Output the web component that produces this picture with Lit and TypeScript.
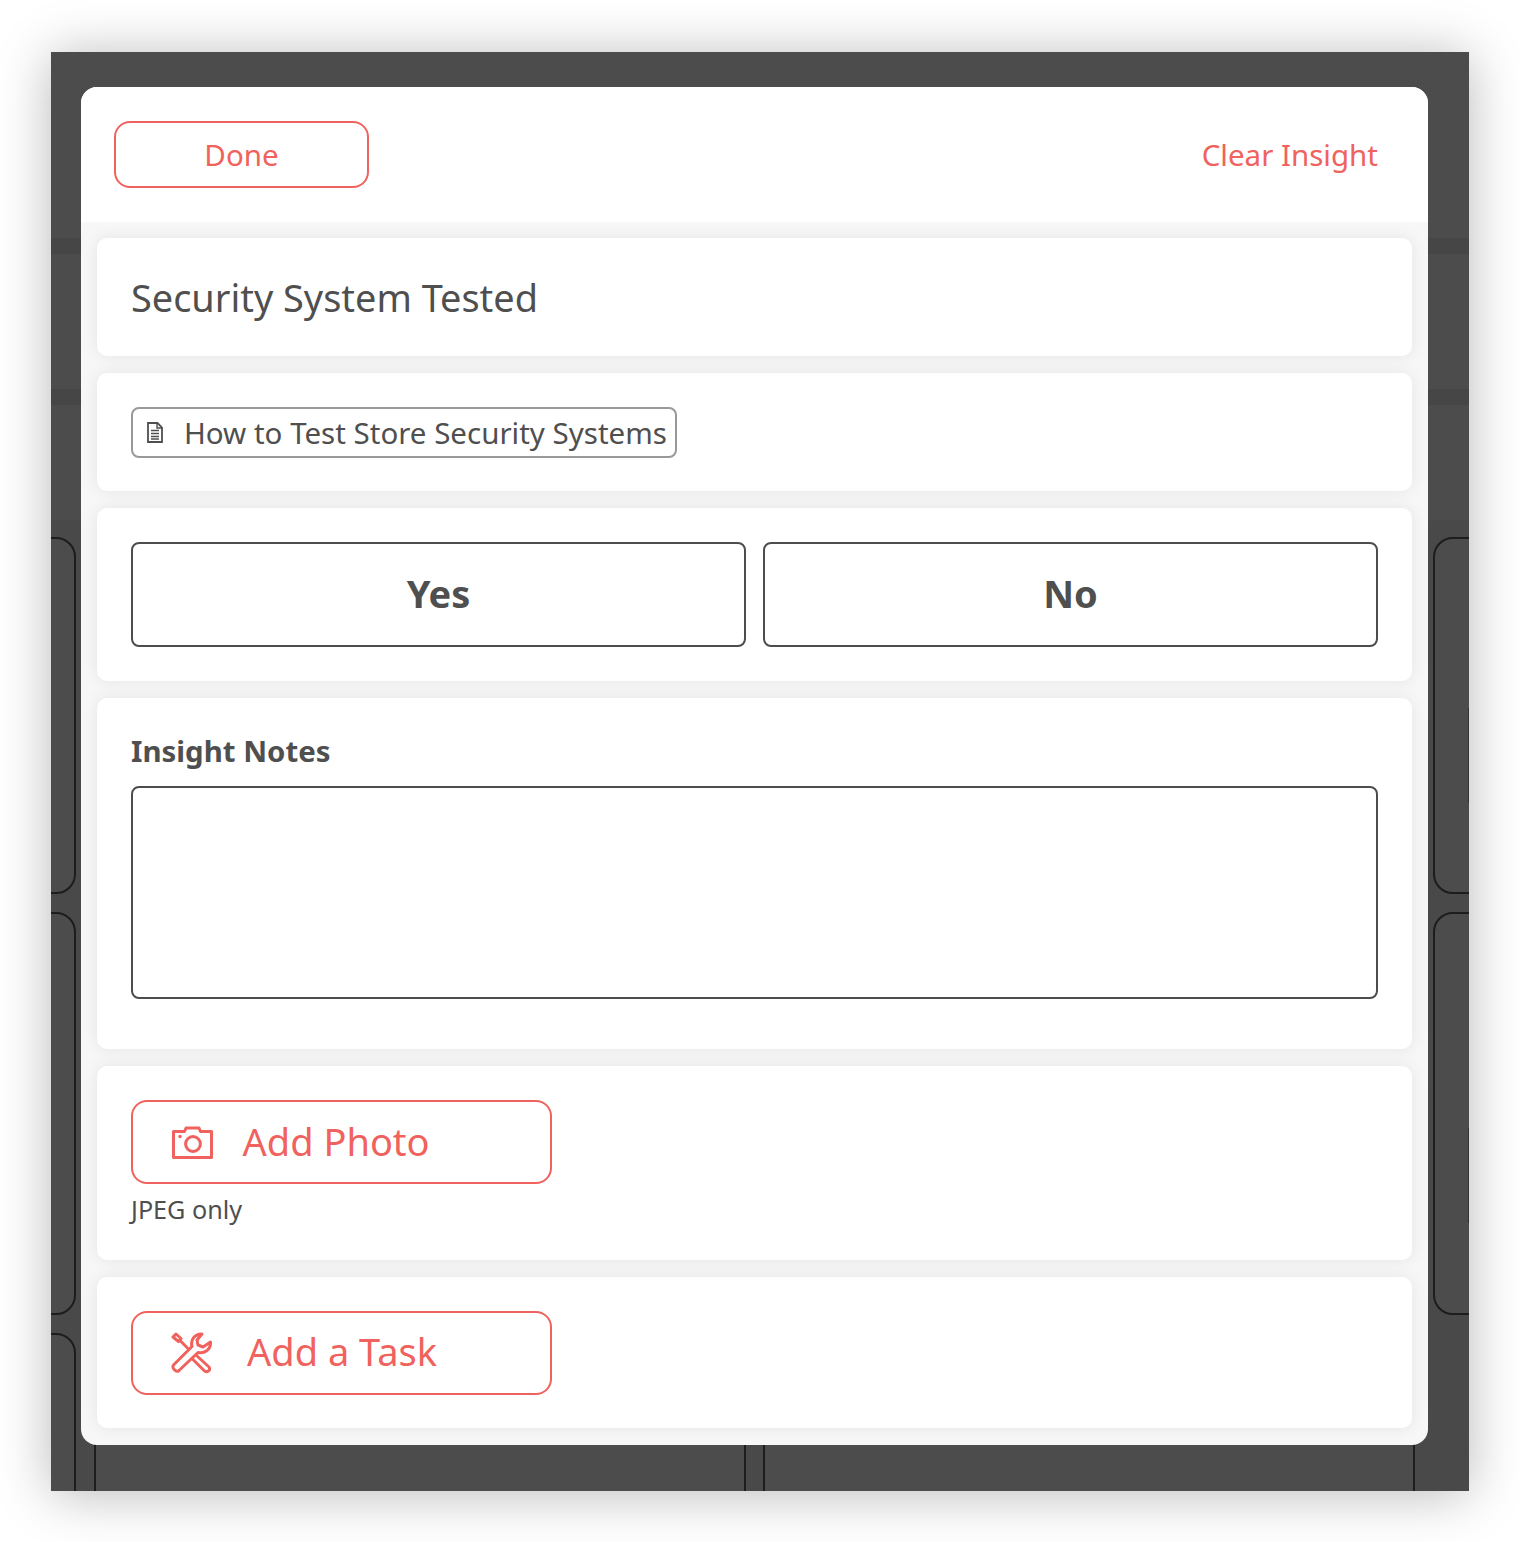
import { LitElement, html, css } from "lit";
import { customElement } from "lit/decorators.js";

@customElement("app-root")
export class AppRoot extends LitElement {
  static styles = css`
    :host { display: block; height: 1542px; padding: 52px 51px 51px; box-sizing: border-box; background: #fff; font-family: "Noto Sans", sans-serif; color: #4f4f4f; }
    * { box-sizing: border-box; }
    .window { position: relative; height: 1439px; background: #4c4c4c; overflow: hidden; }
    .shadow { box-shadow: 0 3px 50px rgba(0,0,0,.28); height: 1439px; }
    .sec1 { height: 186px; }
    .band { height: 16px; background: #464646; }
    .sec2 { height: 135px; }
    .sec3 { height: 115px; }
    .grid { display: grid; grid-template-columns: repeat(4, 652px); grid-auto-rows: min-content; gap: 18px 17.5px; margin-left: -627px; padding-top: 17px; background: #494949; height: 971px; width: 2700px; }
    .bg-card { position: relative; border: 2px solid #1d1d1d; border-radius: 20px; background: #4c4c4c; height: 357px; }
    .bg-card.r2 { height: 402.5px; }
    .bg-card.r3 { height: 400px; }
    .tick { position: absolute; left: 33.5px; width: 1px; height: 95px; background: #333; }
    .t1 { top: 169px; }
    .t2 { top: 214px; }

    .modal { position: absolute; left: 30px; top: 35px; width: 1347px; height: 1358px; border-radius: 16px; background: #f7f7f7; overflow: hidden; display: flex; flex-direction: column; }
    .head { height: 136px; background: #fff; padding: 34px 50px 0 33px; display: flex; justify-content: space-between; align-items: flex-start; }
    button { font-family: inherit; background: #fff; cursor: pointer; }
    .done { width: 255px; height: 67px; border: 2px solid #f0625d; border-radius: 16px; color: #f0625d; font-size: 29.5px; padding: 0; }
    .clear { color: #f0625d; font-size: 29.5px; line-height: 67px; }
    .body { flex: 1; padding: 16px 16px 17px; display: flex; flex-direction: column; gap: 17px; }
    .card { background: #fff; border-radius: 10px; padding: 34px 34px; box-shadow: 0 0 16px rgba(0,0,0,.08); }
    .title { height: 118px; font-size: 37.9px; line-height: 51px; }
    .c2 { height: 118px; }
    .doc { display: inline-flex; align-items: center; height: 51px; width: 546px; border: 2px solid #999; border-radius: 8px; padding: 0 0 0 13px; font-size: 29.5px; color: #4f4f4f; white-space: nowrap; }
    .doc svg { margin-right: 20px; flex: none; }
    .c3 { height: 173px; display: grid; grid-template-columns: 1fr 1fr; gap: 17px; }
    .choice { height: 105px; border: 2px solid #4d4d4d; border-radius: 8px; font-size: 38px; font-weight: 700; color: #4f4f4f; padding: 0 0 4px; }
    .c4 { height: 351px; padding-top: 30px; }
    .label { font-size: 29.4px; font-weight: 700; line-height: 46px; margin-bottom: 12px; }
    textarea { display: block; width: 100%; height: 213px; border: 2px solid #4d4d4d; border-radius: 8px; resize: none; outline: none; background: #fff; }
    .c5 { height: 194px; }
    .c6 { height: 151px; }
    .add { display: flex; align-items: center; width: 421px; height: 84px; border: 2px solid #f0625d; border-radius: 16px; color: #f0625d; font-size: 38px; padding: 0 0 0 39px; white-space: nowrap; }
    .add svg { flex: none; }
    .add span { margin-bottom: 3px; }
    .photo svg { margin-right: 30px; margin-left: -0.5px; }
    .task svg { margin-right: 33px; margin-left: -1px; }
    .task span { margin-bottom: 5px; margin-left: 1px; }
    .hint { font-size: 25.2px; line-height: 34px; margin-top: 8px; }
  `;

  render() {
    return html`
      <div class="shadow">
        <div class="window">
          <div class="sec1"></div>
          <div class="band"></div>
          <div class="sec2"></div>
          <div class="band"></div>
          <div class="sec3"></div>
          <div class="grid">
            ${[0, 1, 2].map(() => html`<div class="bg-card"></div>`)}
            <div class="bg-card"><div class="tick t1"></div></div>
            ${[0, 1, 2].map(() => html`<div class="bg-card r2"></div>`)}
            <div class="bg-card r2"><div class="tick t2"></div></div>
            ${[0, 1, 2].map(() => html`<div class="bg-card r3"></div>`)}
          </div>
          <div class="modal">
            <div class="head">
              <button class="done">Done</button>
              <span class="clear">Clear Insight</span>
            </div>
            <div class="body">
              <div class="card title">Security System Tested</div>
              <div class="card c2">
                <button class="doc">
                  <svg width="18" height="23" viewBox="0 0 18 23" fill="none" stroke="#4f4f4f" stroke-width="1.8">
                    <path d="M2 2h9.500L16 6.500V21H2z" />
                    <path d="M11 2v5h5" stroke-width="1.400" />
                    <path d="M5 9.500h8M5 12.500h8M5 15.500h8M5 18h8" stroke-width="1.400" />
                  </svg>
                  How to Test Store Security Systems
                </button>
              </div>
              <div class="card c3">
                <button class="choice">Yes</button>
                <button class="choice">No</button>
              </div>
              <div class="card c4">
                <div class="label">Insight Notes</div>
                <textarea></textarea>
              </div>
              <div class="card c5">
                <button class="add photo">
                  <svg width="41" height="33" viewBox="0 0 41 33" fill="none" stroke="#f0625d" stroke-width="3">
                    <path d="M1.500 5.500h11l1.500-3.500h13l1.500 3.500h11v26h-38z" stroke-linejoin="round" />
                    <circle cx="21" cy="18" r="7.400" />
                    <circle cx="8" cy="10.500" r="1.700" fill="#f0625d" stroke="none" />
                  </svg>
                  <span>Add Photo</span>
                </button>
                <div class="hint">JPEG only</div>
              </div>
              <div class="card c6">
                <button class="add task">
                  <svg width="42" height="42" viewBox="0 0 42 42" fill="none" stroke="#f0625d" stroke-width="3" stroke-linejoin="round" stroke-linecap="round">
                    <path d="M2.500 33 21 14.500C19.500 9 22.500 2 31 2l-5 6 1 5 5 2 7.500-5c.5 8-6.500 12-12.500 10.500L8 38.500C5 41 .5 36 2.500 33z" />
                    <path d="M25.500 23.500 38 35c2 3-2 6.500-5 3.500L21 26.500" />
                    <path d="M2 5 5 2l5 4.500-2.500 3z" />
                    <path d="M9 8.500 16.500 16" />
                  </svg>
                  <span>Add a Task</span>
                </button>
              </div>
            </div>
          </div>
        </div>
      </div>
    `;
  }
}
